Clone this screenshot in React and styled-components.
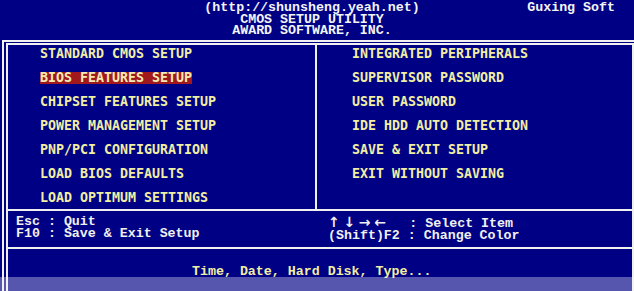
import React from 'react'
import styled, { createGlobalStyle } from 'styled-components'

const GlobalStyle = createGlobalStyle`
  html, body {
    margin: 0;
    padding: 0;
    background: #000084;
    overflow: hidden;
  }
  body {
    width: 634px;
    height: 291px;
  }
`

const Screen = styled.div`
  position: relative;
  width: 634px;
  height: 291px;
  overflow: hidden;
  background: #000084;
`

const Header = styled.header`
  display: grid;
  grid-template-columns: 1fr auto 1fr;
  padding: 2px 10px 0 0;
  height: 37px;
  box-sizing: border-box;
  font-family: 'Liberation Mono', 'DejaVu Sans Mono', monospace;
  font-weight: bold;
  font-size: 13.3px;
  line-height: 11.5px;
  color: #f4f4f4;
  white-space: pre;
`

const TitleBlock = styled.div`
  grid-column: 2;
  display: flex;
  flex-direction: column;
  align-items: center;
`

const Brand = styled.div`
  grid-column: 3;
  justify-self: end;
  margin-right: 9px;
`

const OuterFrame = styled.div`
  margin: 3px 0 0 2px;
  width: 636px;
  height: 260px;
  box-sizing: border-box;
  border: 2px solid #f0f0f0;
  border-bottom: none;
  padding: 1px 2px 0 2px;
`

const InnerFrame = styled.div`
  height: 100%;
  box-sizing: border-box;
  border: 2px solid #f0f0f0;
  border-bottom: none;
  display: flex;
  flex-direction: column;
`

const Menu = styled.div`
  display: grid;
  grid-template-columns: 309px 1fr;
  border-bottom: 2px solid #f0f0f0;
`

const MenuColumn = styled.div`
  display: flex;
  flex-direction: column;
  align-items: flex-start;
  gap: 12px;
  box-sizing: border-box;
  padding: 3px 0 5px ${({ $inset }) => $inset}px;
  border-right: ${({ $divider }) => ($divider ? '2px solid #f0f0f0' : 'none')};
`

const MenuItem = styled.span`
  display: inline-block;
  height: 12px;
  font-family: 'DejaVu Sans Mono', monospace;
  font-weight: bold;
  font-size: 13.3px;
  line-height: 12px;
  white-space: pre;
  color: ${({ $active }) => ($active ? '#f4ecb4' : '#f2eea4')};
  background: ${({ $active }) => ($active ? '#a3181c' : 'transparent')};
`

const Help = styled.div`
  display: grid;
  grid-template-columns: 309px 1fr;
  padding: 5px 0;
  border-bottom: 2px solid #f0f0f0;
  font-family: 'Liberation Mono', 'DejaVu Sans Mono', monospace;
  font-weight: bold;
  font-size: 13.3px;
  line-height: 12px;
  color: #f0f0f0;
  white-space: pre;
`

const HelpColumn = styled.div`
  display: flex;
  flex-direction: column;
  padding-left: ${({ $inset }) => $inset}px;
`

const Arrows = styled.span`
  font-family: 'DejaVu Sans', sans-serif;
  font-size: 14px;
  letter-spacing: -0.6px;
`

const Status = styled.div`
  padding: 17px 0 0 184px;
  font-family: 'Liberation Mono', 'DejaVu Sans Mono', monospace;
  font-weight: bold;
  font-size: 13.3px;
  line-height: 12px;
  color: #f2eea4;
  white-space: pre;
`

const Veil = styled.div`
  position: absolute;
  left: 0;
  right: 0;
  bottom: 0;
  height: 14px;
  background: rgba(250, 245, 255, 0.35);
`

const left = [
  'STANDARD CMOS SETUP',
  'BIOS FEATURES SETUP',
  'CHIPSET FEATURES SETUP',
  'POWER MANAGEMENT SETUP',
  'PNP/PCI CONFIGURATION',
  'LOAD BIOS DEFAULTS',
  'LOAD OPTIMUM SETTINGS'
]

const right = [
  'INTEGRATED PERIPHERALS',
  'SUPERVISOR PASSWORD',
  'USER PASSWORD',
  'IDE HDD AUTO DETECTION',
  'SAVE & EXIT SETUP',
  'EXIT WITHOUT SAVING'
]

export default function App () {
  return (
    <Screen>
      <GlobalStyle />
      <Header>
        <TitleBlock>
          <div>(http://shunsheng.yeah.net)</div>
          <div>CMOS SETUP UTILITY</div>
          <div>AWARD SOFTWARE, INC.</div>
        </TitleBlock>
        <Brand>Guxing Soft</Brand>
      </Header>
      <OuterFrame>
        <InnerFrame>
          <Menu>
            <MenuColumn $inset={32} $divider>
              {left.map((t, i) => (
                <MenuItem key={t} $active={i === 1}>{t}</MenuItem>
              ))}
            </MenuColumn>
            <MenuColumn $inset={35}>
              {right.map(t => <MenuItem key={t}>{t}</MenuItem>)}
            </MenuColumn>
          </Menu>
          <Help>
            <HelpColumn $inset={8}>
              <div>Esc : Quit</div>
              <div>F10 : Save &amp; Exit Setup</div>
            </HelpColumn>
            <HelpColumn $inset={11}>
              <div><Arrows>↑ ↓ → ←</Arrows>   : Select Item</div>
              <div>(Shift)F2 : Change Color</div>
            </HelpColumn>
          </Help>
          <Status>Time, Date, Hard Disk, Type...</Status>
        </InnerFrame>
      </OuterFrame>
      <Veil />
    </Screen>
  )
}
